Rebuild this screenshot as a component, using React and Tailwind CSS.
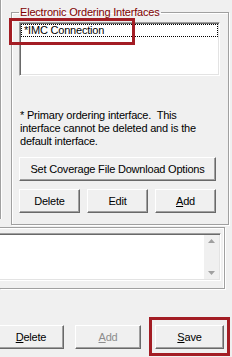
const FONT = { fontFamily: '"Liberation Sans", Arial, sans-serif' }

function WinButton({ children, className = '', disabled = false }) {
  return (
    <button
      type="button"
      className={`flex items-center justify-center border border-t-white border-l-white border-b-[#696969] border-r-[#696969] bg-[#f0f0f0] text-[11px] leading-none tracking-[-0.2px] shadow-[inset_-1px_-1px_0_#a0a0a0] ${
        disabled ? 'text-[#8d8d8d]' : 'text-black'
      } ${className}`}
    >
      {children}
    </button>
  )
}

export default function App() {
  return (
    <div className="relative h-[357px] w-[232px] overflow-hidden bg-[#f0f0f0] text-[11px] tracking-[-0.2px] text-black" style={FONT}>
      <div className="flex h-[226px]">
        <div className="h-[219px] w-[2px] border-l border-r border-l-[#a0a0a0] border-r-white" />
        <fieldset className="ml-[9px] mt-[6px] h-[219px] w-[218px] border border-[#a0a0a0] px-[7px] pb-0 shadow-[1px_1px_0_#fff,inset_1px_1px_0_#fff]">
          <legend className="px-[1px] text-[11px] leading-[13px] text-[#800000]">Electronic Ordering Interfaces</legend>
          <div className="mt-[3px] h-[54px] w-[201px] border border-t-[#a0a0a0] border-l-[#a0a0a0] border-b-white border-r-white bg-white shadow-[inset_1px_1px_0_#696969,inset_-1px_-1px_0_#e3e3e3]">
            <div className="mx-[1px] mt-[1px] h-[13px] border border-dotted border-black pl-[2px] leading-[11px]">*IMC Connection</div>
          </div>
          <div className="mt-[33px] pl-[1px] leading-[13px]">
            <p>* Primary ordering interface.&nbsp; This</p>
            <p>interface cannot be deleted and is the</p>
            <p>default interface.</p>
          </div>
          <WinButton className="mt-[9px] h-[24px] w-[197px]">Set Coverage File Download Options</WinButton>
          <div className="mt-[8px] flex gap-[7px]">
            <WinButton className="h-[24px] w-[61px]">Delete</WinButton>
            <WinButton className="h-[24px] w-[61px]">Edit</WinButton>
            <WinButton className="h-[24px] w-[61px]">
              <span><u>A</u>dd</span>
            </WinButton>
          </div>
        </fieldset>
      </div>

      <div className="mt-[1px] h-[62px] w-[225px] border-t border-r border-b border-[#a0a0a0] shadow-[1px_1px_0_#fff,inset_0_1px_0_#fff,inset_-1px_0_0_#fff]">
        <div className="ml-[-2px] mt-[5px] flex h-[48px] w-[223px] border border-t-[#a0a0a0] border-l-[#a0a0a0] border-b-white border-r-white bg-white shadow-[inset_0_1px_0_#696969,inset_-1px_-1px_0_#e3e3e3]">
          <div className="flex-1" />
          <div className="my-[1px] mr-[1px] flex w-[15px] flex-col items-center justify-between bg-[#f0f0f0] py-[4px]">
            <svg width="7" height="4" viewBox="0 0 7 4"><path d="M3.5 0L7 4H0z" fill="#a0a0a0" /></svg>
            <svg width="7" height="4" viewBox="0 0 7 4"><path d="M0 0h7L3.5 4z" fill="#a0a0a0" /></svg>
          </div>
        </div>
      </div>

      <div className="mt-[36px] flex">
        <WinButton className="ml-[-2px] h-[24px] w-[66px]">
          <span><u>D</u>elete</span>
        </WinButton>
        <WinButton disabled className="ml-[11px] h-[24px] w-[66px]">
          <span><u>A</u>dd</span>
        </WinButton>
        <WinButton className="ml-[14px] h-[24px] w-[69px]">
          <span><u>S</u>ave</span>
        </WinButton>
      </div>

      <div className="absolute left-[9px] top-[18px] h-[27px] w-[126px] border-[3px] border-[#a31d24]" />
      <div className="absolute left-[149px] top-[317px] h-[39px] w-[81px] border-[3px] border-[#a31d24]" />
    </div>
  )
}
